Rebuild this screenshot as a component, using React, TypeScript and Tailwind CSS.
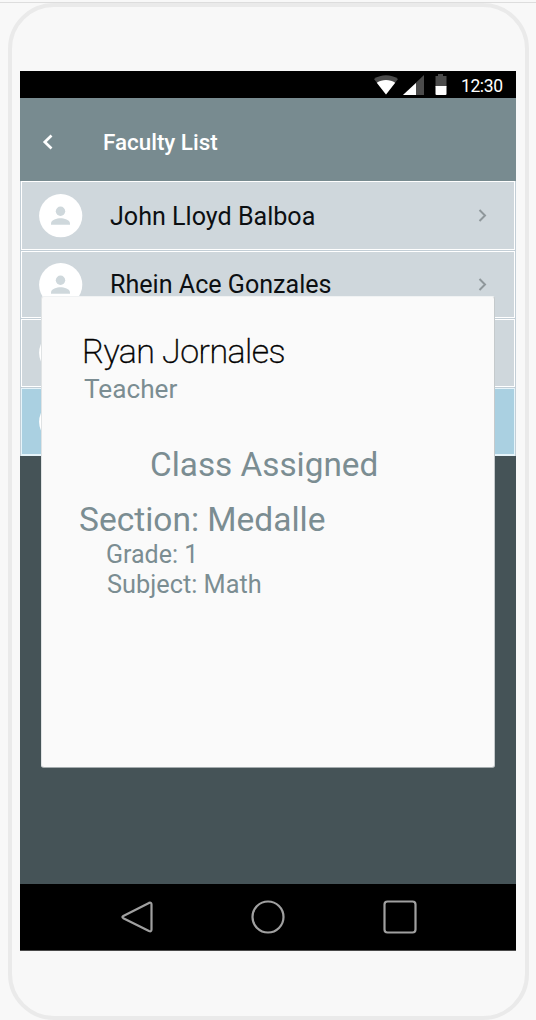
import React from "react";

const faculty = [
  { name: "John Lloyd Balboa", selected: false, height: "h-[70px]", nameOffset: "mt-[2px]" },
  { name: "Rhein Ace Gonzales", selected: false, height: "h-[68px]", nameOffset: "mt-0" },
  { name: "", selected: false, height: "h-[69px]", nameOffset: "mt-0" },
  { name: "", selected: true, height: "h-[68px]", nameOffset: "mt-0" },
];

type RowProps = (typeof faculty)[number];

function Avatar() {
  return (
    <svg width="44" height="44" viewBox="0 0 44 44" className="shrink-0">
      <circle cx="21.700" cy="21.700" r="21.600" fill="#fff" />
      <circle cx="21.500" cy="17.200" r="4.700" fill="#cfd8dc" />
      <path d="M12 30.700v-1.300c0-3.600 6-5.200 9.500-5.200s9.500 1.600 9.500 5.200v1.300z" fill="#cfd8dc" />
    </svg>
  );
}

function StatusBar() {
  return (
    <div className="flex h-[27px] shrink-0 items-start bg-black pl-[353px] text-white">
      <svg width="88" height="27" viewBox="0 0 88 27" className="shrink-0">
        <path d="M1 8C8 3 18 3 25 8L13 23.500z" fill="#4b4b4b" />
        <path d="M3.800 11.700C9 8 17 8 22.200 11.700L13 23.500z" fill="#fff" />
        <path d="M51 4V24H30z" fill="#4b4b4b" />
        <path d="M43 12V24H30z" fill="#fff" />
        <path d="M65 3h5v2h3.500v11h-11V5H65z" fill="#4b4b4b" />
        <path d="M62.500 15h11v8q0 1-1 1h-9q-1 0-1-1z" fill="#fff" />
      </svg>
      <span className="mt-[3px] text-[17.5px] leading-[24px] tracking-[-0.4px]">12:30</span>
    </div>
  );
}

function Row({ name, selected, height, nameOffset }: RowProps) {
  return (
    <div
      className={`flex shrink-0 flex-col border-x border-[#c3ced6] ${height} ${
        selected ? "" : "border-b"
      }`}
    >
      <div
        className={`flex flex-1 items-center border pl-[17px] ${
          selected ? "border-[#e6f4fa] border-b-2 bg-[#aad0e1]" : "border-white bg-[#cfd7dc]"
        }`}
      >
        <Avatar />
        <span
          className={`ml-[27px] flex-1 whitespace-nowrap text-[25.100px] leading-[30px] text-[#0c0f12] ${nameOffset}`}
        >
          {name}
        </span>
        <svg width="12" height="16" viewBox="0 0 12 16" className="mr-[25px]">
          <path d="M2.500 2L8 7.500l-5.500 5.500" fill="none" stroke="#8f979b" strokeWidth="2" />
        </svg>
      </div>
    </div>
  );
}

function NavBar() {
  return (
    <div className="flex h-[67px] shrink-0 items-center border-b border-[#4a4a4a] bg-black">
      <svg width="496" height="67" viewBox="0 0 496 67" fill="none" stroke="#a0a0a0" strokeWidth="2.2" strokeLinejoin="round">
        <path d="M103.300 32L129 18.900Q131.500 18 131.500 20.500V45.500Q131.500 48 129 47L103.300 34.200Q101.500 33 103.300 32z" />
        <circle cx="248" cy="33" r="15.500" />
        <rect x="364.500" y="17.500" width="31" height="31" rx="3" />
      </svg>
    </div>
  );
}

function TeacherCard() {
  return (
    <section className="absolute left-[41px] top-[296px] flex h-[472px] w-[454px] flex-col rounded-[3px] border border-b-[#a5acae] border-l-[#e0e3e4] border-r-[#c5cacc] border-t-[#f0f2f3] bg-[#fafafa] text-[#7b8d92]">
      <h2 className="ml-[40px] mt-[34px] text-[34px] font-extralight leading-[40px] tracking-[-0.55px] text-black [-webkit-text-stroke:0.4px_black]">
        Ryan Jornales
      </h2>
      <p className="ml-[42px] mt-[2px] text-[26.200px] leading-[32px]">Teacher</p>
      <h3 className="ml-[108px] mt-[40px] text-[33.300px] leading-[40px]">Class Assigned</h3>
      <h4 className="ml-[37px] mt-[15px] text-[33.500px] leading-[40px]">Section: Medalle</h4>
      <p className="ml-[64px] text-[25px] leading-[30px]">Grade: 1</p>
      <p className="ml-[65px] text-[25.300px] leading-[30px]">Subject: Math</p>
    </section>
  );
}

export default function App() {
  return (
    <div className="relative h-[1020px] w-[536px] overflow-hidden bg-[#f8f8f8] pt-[2px] font-[Roboto,sans-serif]">
      <div className="flex h-[1018px] flex-col border-t border-[#dddddd] px-[8px]">
        <main className="flex h-[1017px] w-[521px] shrink-0 flex-col rounded-[46px] border-4 border-[#eaeaea] pl-[8px] pr-[9px] pt-[64px]">
          <StatusBar />
          <header className="flex h-[83px] shrink-0 items-center bg-[#788b90] pl-[20px] text-white">
            <svg width="16" height="20" viewBox="0 0 16 20" className="mt-[5px]">
              <path d="M11.500 3.500L4.800 10l6.700 6.500" fill="none" stroke="#fff" strokeWidth="2.700" />
            </svg>
            <h1 className="ml-[47px] mt-[5px] text-[22.400px] font-medium leading-[28px]">Faculty List</h1>
          </header>
          {faculty.map((person, index) => (
            <Row key={index} {...person} />
          ))}
          <div className="h-[428px] shrink-0 bg-[#455357]" />
          <NavBar />
        </main>
      </div>
      <TeacherCard />
    </div>
  );
}
